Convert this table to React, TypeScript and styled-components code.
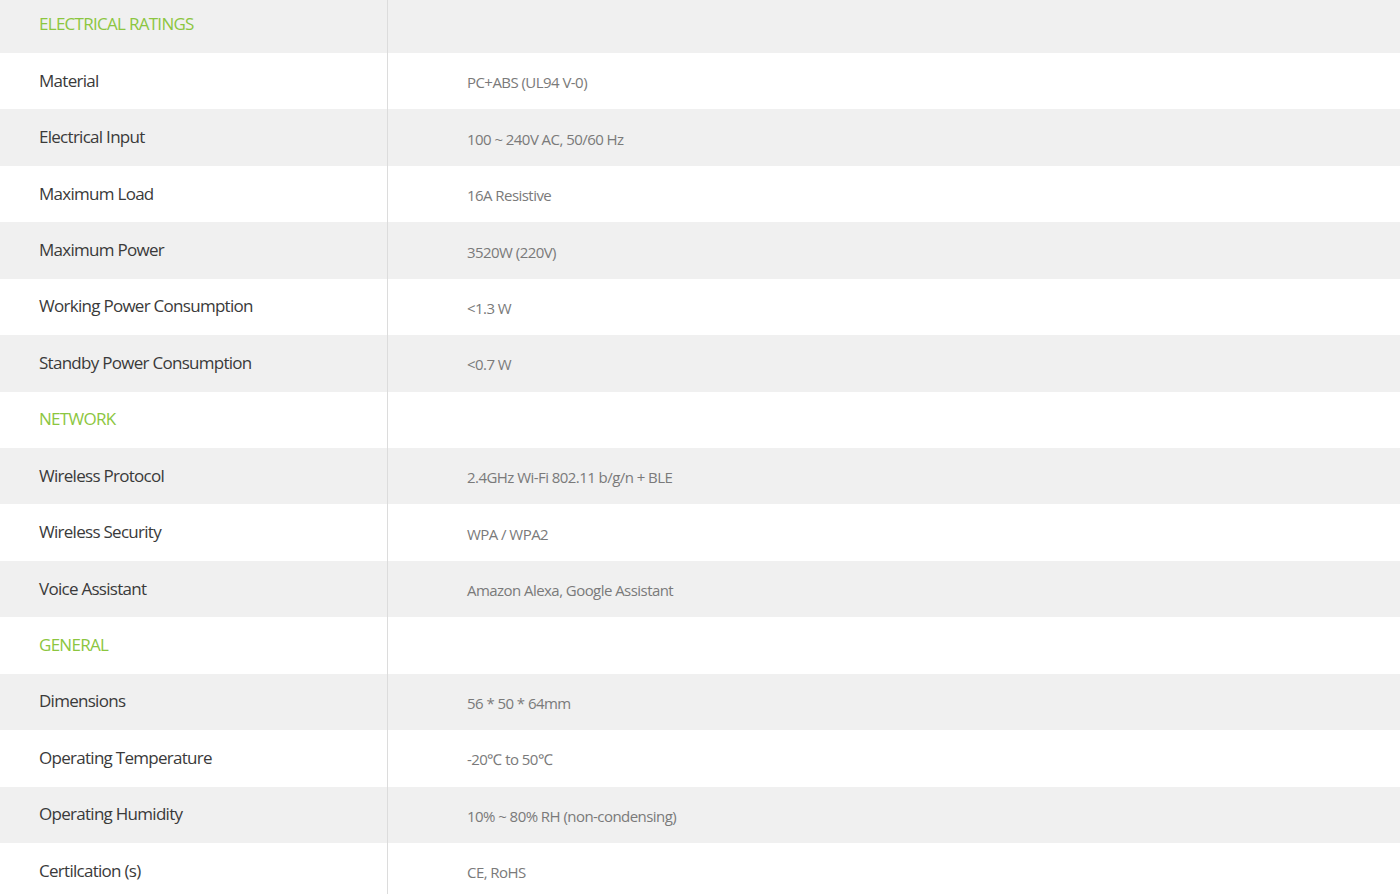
import React from "react";
import styled, { createGlobalStyle } from "styled-components";

const Global = createGlobalStyle`
  html, body { margin: 0; padding: 0; background: #ffffff; }
  body { font-family: "Open Sans", "Liberation Sans", sans-serif; overflow: hidden; }
`;

const Table = styled.div`
  display: flex;
  flex-direction: column;
  margin-top: -3.4px;
`;

const Row = styled.div<{ $shaded: boolean }>`
  display: grid;
  grid-template-columns: 388px 1fr;
  height: 56.43px;
  background: ${(p) => (p.$shaded ? "#f0f0f0" : "#ffffff")};
`;

const Label = styled.div<{ $section: boolean }>`
  display: flex;
  align-items: center;
  padding-left: 39px;
  padding-bottom: 2px;
  border-right: 1px solid #dcdcdc;
  font-size: 17px;
  letter-spacing: -0.72px;
  color: ${(p) => (p.$section ? "#8cc63f" : "#3a3a3a")};
  white-space: nowrap;
`;

const Value = styled.div`
  display: flex;
  align-items: center;
  padding-left: 79px;
  padding-top: 2px;
  font-size: 15px;
  letter-spacing: -0.55px;
  color: #7a7a7a;
  white-space: nowrap;
`;

type Item = { label: string; value?: string; section?: boolean };

const rows: Item[] = [
  { label: "ELECTRICAL RATINGS", section: true },
  { label: "Material", value: "PC+ABS (UL94 V-0)" },
  { label: "Electrical Input", value: "100 ~ 240V AC, 50/60 Hz" },
  { label: "Maximum Load", value: "16A Resistive" },
  { label: "Maximum Power", value: "3520W (220V)" },
  { label: "Working Power Consumption", value: "<1.3 W" },
  { label: "Standby Power Consumption", value: "<0.7 W" },
  { label: "NETWORK", section: true },
  { label: "Wireless Protocol", value: "2.4GHz Wi-Fi 802.11 b/g/n + BLE" },
  { label: "Wireless Security", value: "WPA / WPA2" },
  { label: "Voice Assistant", value: "Amazon Alexa, Google Assistant" },
  { label: "GENERAL", section: true },
  { label: "Dimensions", value: "56 * 50 * 64mm" },
  { label: "Operating Temperature", value: "-20℃ to 50℃" },
  { label: "Operating Humidity", value: "10% ~ 80% RH (non-condensing)" },
  { label: "Certilcation (s)", value: "CE, RoHS" },
];

export default function App() {
  return (
    <>
      <Global />
      <Table>
        {rows.map((r, i) => (
          <Row key={r.label} $shaded={i % 2 === 0}>
            <Label $section={!!r.section}>{r.label}</Label>
            <Value>{r.value ?? ""}</Value>
          </Row>
        ))}
      </Table>
    </>
  );
}
